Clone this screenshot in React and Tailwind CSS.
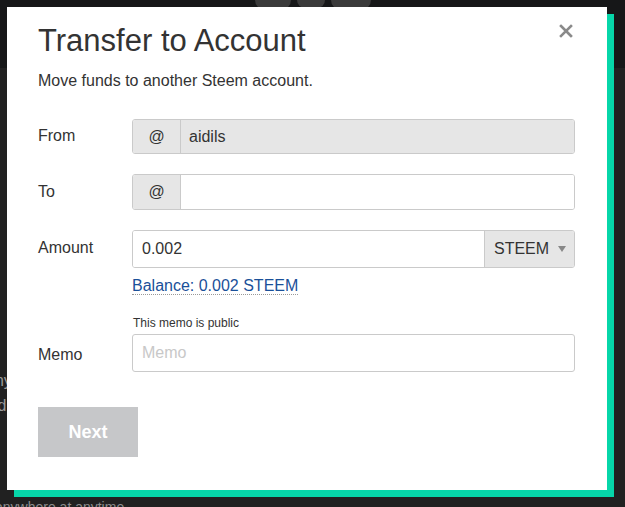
import React from 'react';

function CloseIcon() {
  return (
    <svg width="14" height="14" viewBox="0 0 14 14" className="block">
      <path d="M2 2 L12 12 M12 2 L2 12" stroke="#8a8a8a" strokeWidth="2.6" strokeLinecap="square" />
    </svg>
  );
}

function Label({ children, pad }) {
  return (
    <div className={`w-[94px] shrink-0 text-[16px] leading-6 text-[#333] ${pad}`}>{children}</div>
  );
}

export default function App() {
  return (
    <div
      className="relative h-[507px] w-[625px] overflow-hidden bg-[#212121]"
      style={{ fontFamily: '"Liberation Sans", Arial, sans-serif' }}
    >
      {/* page behind the modal */}
      <div className="h-[68px] bg-[#161718] flex justify-center gap-[6px] pt-0">
        <div className="w-[36px] h-[10px] rounded-b-full bg-[#3a3a3a]" />
        <div className="w-[28px] h-[8px] rounded-b-full bg-[#3a3a3a]" />
        <div className="w-[40px] h-[10px] rounded-b-full bg-[#3a3a3a]" />
      </div>
      <div className="pt-[300px] text-[16px] leading-[25px] text-[#9a9a9a] -ml-[14px]">
        <p>any</p>
        <p>Rd</p>
      </div>
      <div className="absolute left-0 top-[497px] text-[14px] text-[#8d8d8d] -ml-[5px]">anywhere at anytime</div>

      {/* modal */}
      <div className="absolute left-[7px] top-[7px] w-[600px] h-[483px] bg-white shadow-[7px_7px_0_0_#06d6a9] pl-[31px] pr-[32px] pt-[16px]">
        <button className="absolute right-[34px] top-[17px] p-0">
          <CloseIcon />
        </button>

        <h3 className="text-[31px] leading-[36px] text-[#333] font-normal">Transfer to Account</h3>
        <p className="mt-[10px] text-[16px] leading-6 text-[#333]">Move funds to another Steem account.</p>

        {/* From */}
        <div className="mt-[26px] flex">
          <Label pad="pt-[5px]">From</Label>
          <div className="flex flex-1 h-[35px] rounded-[3px] border border-[#cacaca] overflow-hidden">
            <div className="w-[48px] shrink-0 flex items-center justify-center bg-[#e6e6e6] border-r border-[#cacaca] text-[16px] text-[#333]">@</div>
            <div className="flex-1 flex items-center pl-[8px] bg-[#e6e6e6] text-[16px] text-[#333]">aidils</div>
          </div>
        </div>

        {/* To */}
        <div className="mt-[20px] flex">
          <Label pad="pt-[6px]">To</Label>
          <div className="flex flex-1 h-[36px] rounded-[3px] border border-[#cacaca] overflow-hidden">
            <div className="w-[48px] shrink-0 flex items-center justify-center bg-[#e6e6e6] border-r border-[#cacaca] text-[16px] text-[#333]">@</div>
            <div className="flex-1 bg-white" />
          </div>
        </div>

        {/* Amount */}
        <div className="mt-[20px] flex">
          <Label pad="pt-[6px]">Amount</Label>
          <div className="flex-1">
            <div className="flex h-[38px] rounded-[3px] border border-[#cacaca] overflow-hidden">
              <div className="flex-1 flex items-center pl-[9px] text-[16px] text-[#333] bg-white">0.002</div>
              <div className="w-[90px] shrink-0 flex items-center bg-[#e6e6e6] border-l border-[#cacaca] pl-[9px] text-[16px] text-[#333]">
                STEEM
                <span className="ml-[9px] inline-block w-0 h-0 border-l-[4px] border-r-[4px] border-t-[6px] border-l-transparent border-r-transparent border-t-[#888]" />
              </div>
            </div>
            <div className="mt-[6px] leading-6">
              <span className="text-[16px] text-[#1a5099] border-b border-dotted border-[#999]">Balance: 0.002 STEEM</span>
            </div>
          </div>
        </div>

        {/* Memo */}
        <div className="mt-[16px] flex">
          <Label pad="pt-[29px]">Memo</Label>
          <div className="flex-1">
            <div className="text-[12px] leading-[18px] text-[#333] pl-[1px]">This memo is public</div>
            <div className="mt-[2px] h-[38px] rounded-[3px] border border-[#cacaca] flex items-center pl-[9px] text-[16px] text-[#c8c8c8] bg-white">Memo</div>
          </div>
        </div>

        <button className="mt-[35px] w-[100px] h-[50px] bg-[#c6c7c9] text-white text-[18px] font-bold flex items-center justify-center">
          Next
        </button>
      </div>
    </div>
  );
}
